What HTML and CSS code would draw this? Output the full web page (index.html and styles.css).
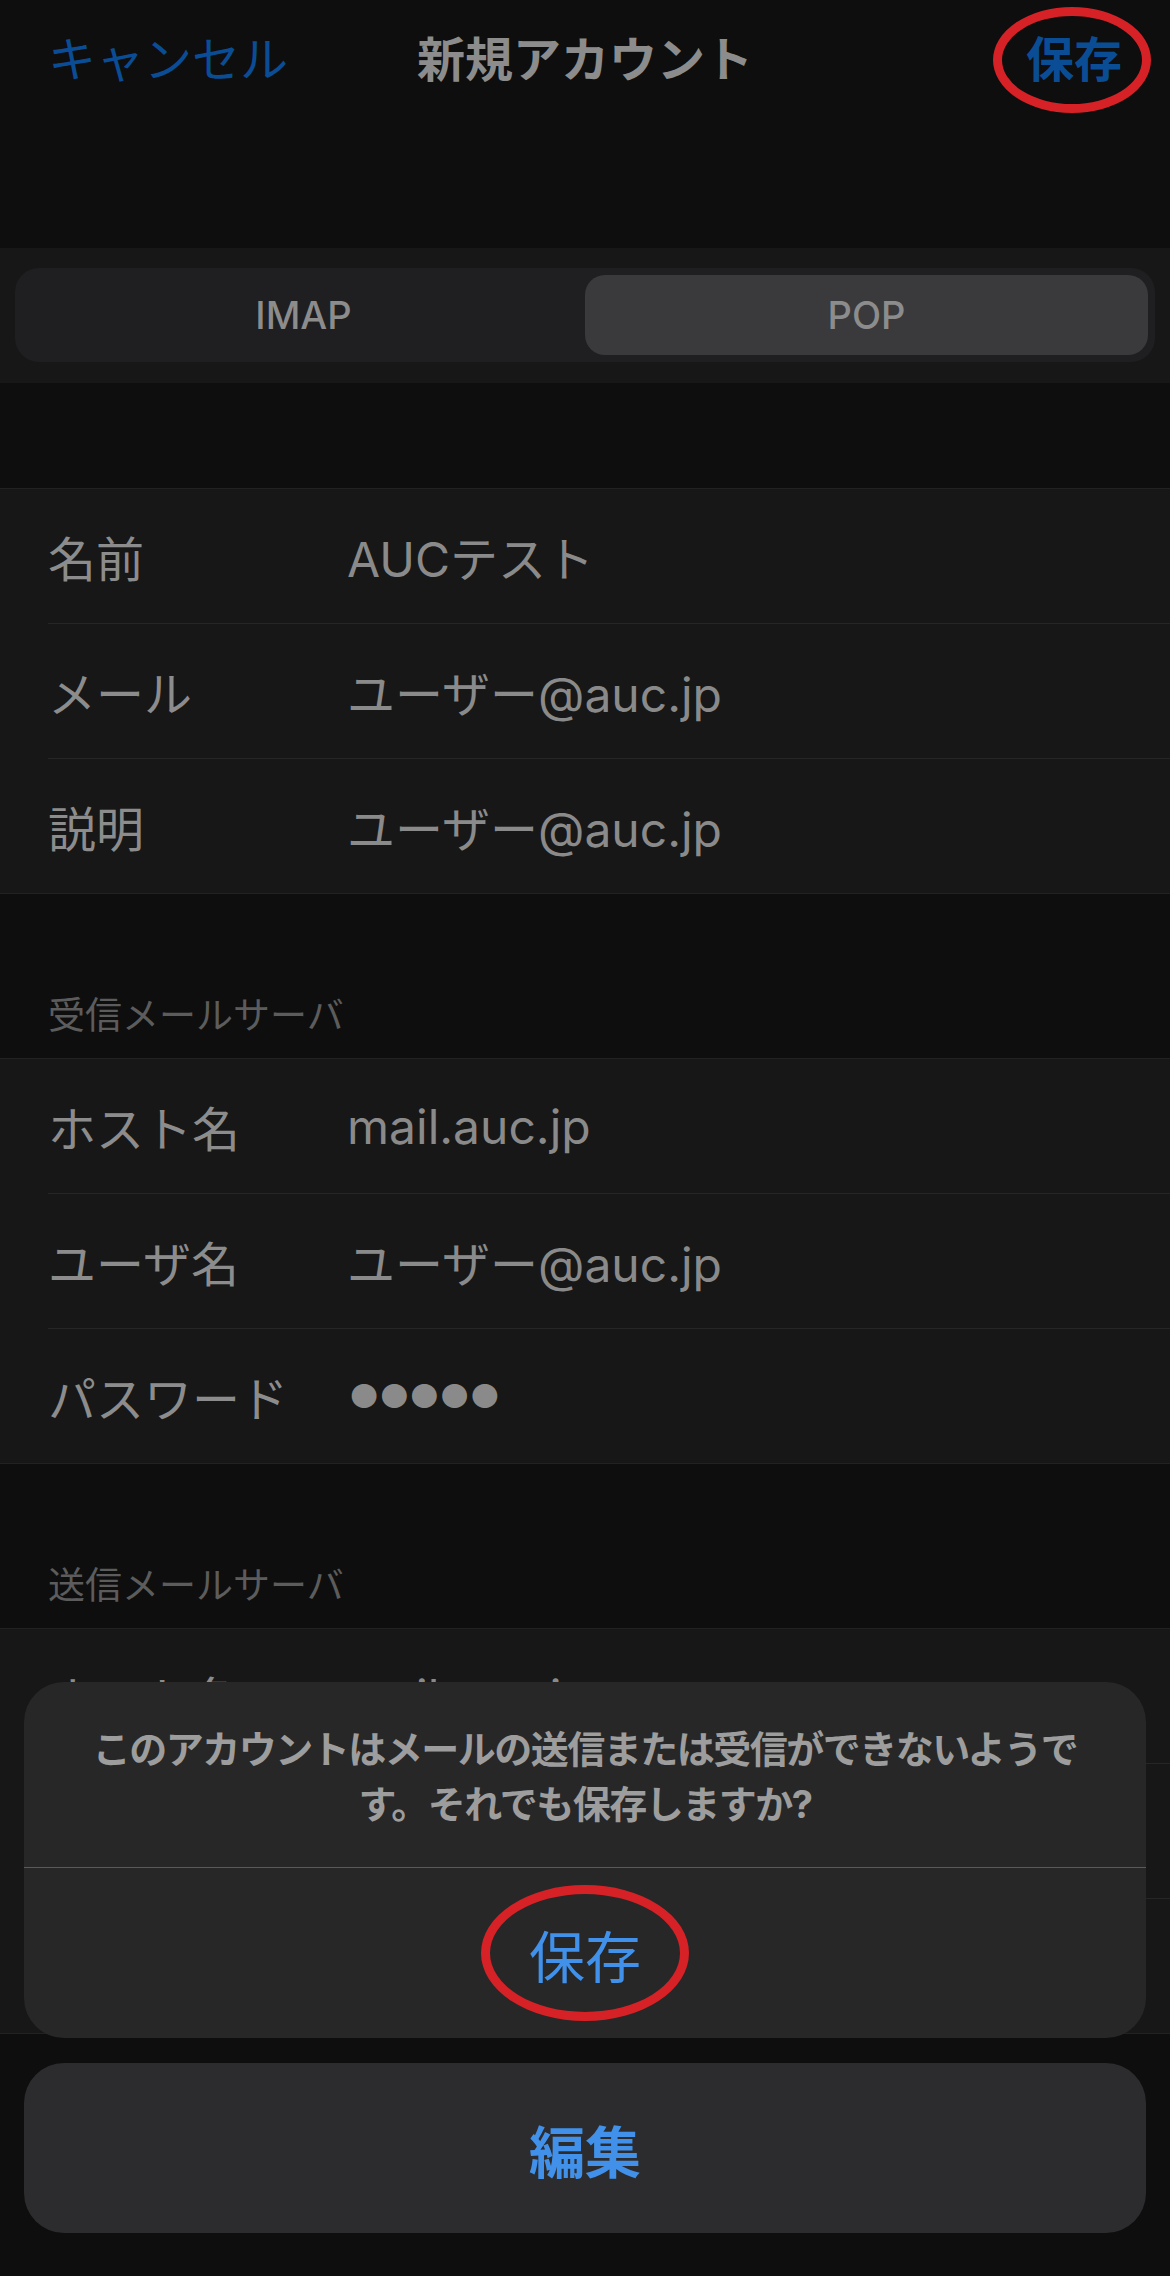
FILE: index.html
```html
<!DOCTYPE html>
<html lang="ja">
<head>
    <meta charset="UTF-8">
    <meta name="viewport" content="width=device-width, initial-scale=1.0">
    <title>新規アカウント</title>
    <link rel="stylesheet" href="styles.css">
</head>
<body>
    <div class="page">
        <div class="nav">
            <span class="nav-cancel">キャンセル</span>
            <span class="nav-title">新規アカウント</span>
            <span class="nav-save">保存<span class="mark mark-top"></span></span>
        </div>

        <div class="seg-band">
            <div class="seg">
                <div class="seg-item">IMAP</div>
                <div class="seg-item active">POP</div>
            </div>
        </div>

        <div class="group first">
            <div class="row"><span class="label">名前</span><span class="value">AUCテスト</span></div>
            <div class="row"><span class="label">メール</span><span class="value">ユーザー@auc.jp</span></div>
            <div class="row"><span class="label">説明</span><span class="value">ユーザー@auc.jp</span></div>
        </div>

        <div class="section-head">受信メールサーバ</div>
        <div class="group">
            <div class="row"><span class="label">ホスト名</span><span class="value">mail.auc.jp</span></div>
            <div class="row"><span class="label">ユーザ名</span><span class="value">ユーザー@auc.jp</span></div>
            <div class="row"><span class="label">パスワード</span><span class="value dots">●●●●●</span></div>
        </div>

        <div class="section-head">送信メールサーバ</div>
        <div class="group">
            <div class="row"><span class="label">ホスト名</span><span class="value">mail.auc.jp</span></div>
            <div class="row"><span class="label">ユーザ名</span><span class="value">ユーザー@auc.jp</span></div>
            <div class="row"><span class="label">パスワード</span><span class="value dots">●●●●●</span></div>
        </div>

        <!-- action sheet -->
        <div class="sheet">
            <div class="alert">
                <div class="alert-msg">このアカウントはメールの送信または受信ができないようで<br>す。それでも保存しますか?</div>
                <div class="alert-btn"><span class="btn-text">保存<span class="mark mark-bottom"></span></span></div>
            </div>
            <div class="cancel-btn">編集</div>
        </div>
    </div>
</body>
</html>
```

FILE: styles.css
```css
body {
    margin: 0;
    background: #0e0e0e;
    font-family: 'Inter', 'Noto Sans CJK JP', sans-serif;
    color: #8c8c8c;
}

.page {
    position: relative;
    min-height: 2276px;
    overflow: hidden;
}

.nav {
    height: 112px;
    padding: 0 48px;
    display: grid;
    grid-template-columns: 1fr auto 1fr;
    align-items: center;
    font-size: 48px;
}

.nav-cancel {
    color: #0b4d95;
    justify-self: start;
}

.nav-title {
    font-weight: bold;
    color: #8c8c8c;
}

.nav-save {
    position: relative;
    justify-self: end;
    font-weight: bold;
    color: #0b4d95;
}

.mark {
    position: absolute;
    left: 50%;
    top: 50%;
    border: 9px solid #d62226;
    border-radius: 50%;
    box-sizing: border-box;
    transform: translate(-50%, -50%);
}

.mark-top {
    width: 158px;
    height: 106px;
    margin-top: 4px;
    margin-left: -2px;
}

.mark-bottom {
    width: 208px;
    height: 136px;
}

.seg-band {
    margin-top: 136px;
    background: #171717;
    padding: 20px 15px 21px;
}

.seg {
    display: grid;
    grid-template-columns: 1fr 1fr;
    height: 94px;
    padding: 7px;
    box-sizing: border-box;
    background: #1f1f21;
    border-radius: 24px;
}

.seg-item {
    display: flex;
    align-items: center;
    justify-content: center;
    font-size: 38px;
    font-weight: 500;
    color: #8c8c8c;
    border-radius: 20px;
}

.seg-item.active {
    background: #3a3a3c;
}

.group {
    background: #171717;
    border-top: 1px solid #222;
    border-bottom: 1px solid #222;
}

.group.first {
    margin-top: 105px;
}

.row {
    margin-left: 48px;
    height: 134px;
    display: grid;
    grid-template-columns: 299px 1fr;
    align-items: center;
    font-size: 48px;
}

.row + .row {
    border-top: 1px solid #262626;
}

.value {
    color: #8a8a8a;
}

.dots {
    font-size: 33px;
    padding-left: 2px;
}

.section-head {
    padding: 99px 48px 19px;
    font-size: 37px;
    line-height: 46px;
    color: #5c5c5c;
}

.sheet {
    position: absolute;
    left: 24px;
    right: 24px;
    bottom: 43px;
}

.alert {
    background: #272727;
    border-radius: 40px;
    overflow: hidden;
}

.alert-msg {
    padding: 40px 40px 35px;
    text-align: center;
    font-size: 38px;
    line-height: 55px;
    font-weight: bold;
    letter-spacing: -1.5px;
    color: #9d9d9d;
    white-space: nowrap;
}

.alert-btn {
    height: 170px;
    border-top: 1px solid #5a5a5a;
    display: flex;
    align-items: center;
    justify-content: center;
    font-size: 56px;
    color: #4191ea;
}

.btn-text {
    position: relative;
}

.cancel-btn {
    margin-top: 25px;
    height: 170px;
    background: #2c2c2e;
    border-radius: 40px;
    display: flex;
    align-items: center;
    justify-content: center;
    font-size: 56px;
    font-weight: bold;
    color: #4191ea;
}
```
